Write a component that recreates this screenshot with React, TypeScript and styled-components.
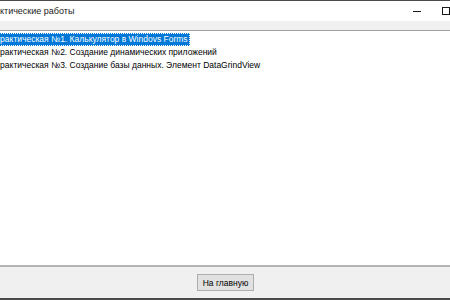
import React from 'react';
import styled, { createGlobalStyle } from 'styled-components';

const Global = createGlobalStyle`
  html, body {
    margin: 0;
    padding: 0;
    width: 450px;
    height: 300px;
    overflow: hidden;
    background: #f0f0f0;
  }
`;

const practices = [
  'Практическая №1. Калькулятор в Windovs Forms',
  'Практическая №2. Создание динамических приложений',
  'Практическая №3. Создание базы данных. Элемент DataGrindView',
];

const App: React.FC = () => {
  return (
    <>
      <Global />
      <Viewport>
        <Window>
          <TitleBar>
            <Title>Практические работы</Title>
            <Controls>
              <CtrlButton>
                <svg width="8" height="8" viewBox="0 0 8 8">
                  <path d="M0 4.5h8" stroke="#1a1a1a" strokeWidth="1" />
                </svg>
              </CtrlButton>
              <CtrlButton>
                <svg width="8" height="8" viewBox="0 0 8 8">
                  <rect x="0.5" y="0.5" width="7" height="7" fill="none" stroke="#1a1a1a" strokeWidth="1" />
                </svg>
              </CtrlButton>
              <CtrlButton>
                <svg width="8" height="8" viewBox="0 0 8 8">
                  <path d="M0.5 0.5l7 7M7.5 0.5l-7 7" stroke="#1a1a1a" strokeWidth="1" />
                </svg>
              </CtrlButton>
            </Controls>
          </TitleBar>
          <Body>
            <ListBox>
              {practices.map((p, i) => (
                <Item key={p} selected={i === 0}>
                  {p}
                </Item>
              ))}
            </ListBox>
            <Footer>
              <Button>На главную</Button>
            </Footer>
          </Body>
        </Window>
      </Viewport>
    </>
  );
};

export default App;

const Viewport = styled.div`
  width: 450px;
  height: 300px;
  overflow: hidden;
`;

const Window = styled.div`
  margin-left: -10px;
  width: 500px;
  height: 300px;
  display: flex;
  flex-direction: column;
  box-sizing: border-box;
  border-top: 1px solid #4a4a4a;
  border-bottom: 2px solid #4a4a4a;
  background: #f0f0f0;
`;

const TitleBar = styled.div`
  height: 20px;
  background: #ffffff;
  display: flex;
  align-items: center;
  justify-content: space-between;
`;

const Title = styled.span`
  font-family: 'Liberation Sans', Arial, sans-serif;
  font-size: 9px;
  color: #1a1a1a;
  margin-left: -6.5px;
  white-space: nowrap;
`;

const Controls = styled.div`
  display: flex;
  align-items: center;
  margin-right: 1px;
`;

const CtrlButton = styled.div`
  width: 29px;
  height: 20px;
  display: flex;
  align-items: center;
  justify-content: center;
`;

const Body = styled.div`
  flex: 1;
  display: flex;
  flex-direction: column;
  padding-top: 9px;
`;

const ListBox = styled.div`
  flex: 1;
  background: #ffffff;
  border-top: 1px solid #a0a0a0;
  border-bottom: 2px solid #b4b4b4;
  padding-top: 2px;
  font-family: 'Liberation Sans', Arial, sans-serif;
  font-size: 8.5px;
`;

const Item = styled.div<{ selected?: boolean }>`
  height: 13px;
  line-height: 13px;
  padding-left: 4px;
  padding-right: 2px;
  width: fit-content;
  white-space: nowrap;
  color: ${p => (p.selected ? '#ffffff' : '#000000')};
  background: ${p => (p.selected ? '#0078d7' : 'transparent')};
  outline: ${p => (p.selected ? '1px dotted #ffffff' : 'none')};
  outline-offset: -1px;
`;

const Footer = styled.div`
  height: 31px;
  display: flex;
  align-items: center;
  justify-content: center;
  padding-right: 29px;
`;

const Button = styled.button`
  width: 57px;
  height: 17px;
  padding: 0;
  white-space: nowrap;
  font-family: 'Liberation Sans', Arial, sans-serif;
  font-size: 8.5px;
  color: #000;
  background: #e1e1e1;
  border: 1px solid #adadad;
  border-radius: 0;
`;
